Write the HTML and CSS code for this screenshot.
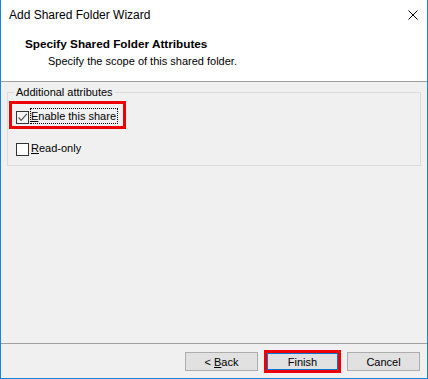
FILE: index.html
```html
<!DOCTYPE html>
<html lang="en">

<head>
    <meta charset="UTF-8">
    <meta name="viewport" content="width=device-width, initial-scale=1.0">
    <title>Add Shared Folder Wizard</title>
    <link rel="stylesheet" href="styles.css">
</head>

<body>
    <div class="window">
        <div class="titlebar">
            <span class="caption">Add Shared Folder Wizard</span>
            <svg class="close" width="10" height="10" viewBox="0 0 10 10">
                <path d="M0.5 0.5 L9.5 9.5 M9.5 0.5 L0.5 9.5" stroke="#000" stroke-width="1" fill="none" />
            </svg>
        </div>

        <div class="header">
            <div class="heading">Specify Shared Folder Attributes</div>
            <div class="subheading">Specify the scope of this shared folder.</div>
        </div>

        <div class="body">
            <fieldset class="group">
                <legend>Additional attributes</legend>
                <div class="option marked">
                    <span class="check checked">
                        <svg width="11" height="11" viewBox="0 0 11 11">
                            <path d="M1.5 5.5 L4.2 8.3 L9.8 1.8" stroke="#555" stroke-width="1.2" fill="none" />
                        </svg>
                    </span>
                    <span class="label focus"><u>E</u>nable this share</span>
                </div>
                <div class="option">
                    <span class="check"></span>
                    <span class="label"><u>R</u>ead-only</span>
                </div>
            </fieldset>
        </div>

        <div class="footer">
            <button class="btn">&lt; <u>B</u>ack</button>
            <button class="btn default marked">Finish</button>
            <button class="btn">Cancel</button>
        </div>
    </div>
</body>

</html>
```

FILE: styles.css
```css
* {
    margin: 0;
    padding: 0;
    box-sizing: border-box;
}

body {
    font-family: "Liberation Sans", Arial, sans-serif;
    font-size: 11px;
    color: #000000;
    background-color: #f0f0f0;
}

.window {
    width: 428px;
    height: 379px;
    display: flex;
    flex-direction: column;
    border: 1px solid #1883d7;
    border-top: 0;
    background-color: #f0f0f0;
}

.titlebar {
    height: 30px;
    display: flex;
    align-items: center;
    justify-content: space-between;
    padding: 0 9px 0 8px;
    background-color: #ffffff;
}

.caption {
    font-size: 12px;
    line-height: 30px;
}

.close {
    display: block;
}

.header {
    height: 52px;
    padding-top: 7px;
    background-color: #ffffff;
    border-bottom: 1px solid #a0a0a0;
    line-height: 14px;
}

.heading {
    padding-left: 24px;
    font-size: 11.75px;
    font-weight: bold;
}

.subheading {
    margin-top: 3px;
    padding-left: 47px;
}

.body {
    flex: 1;
    padding: 3px 6px 0 6px;
}

.group {
    border: 1px solid #dcdcdc;
    padding: 6px 6px 8px 6px;
}

.group legend {
    padding: 0 2px;
    line-height: 14px;
}

.option {
    display: flex;
    align-items: flex-end;
    width: fit-content;
    height: 20px;
    margin-left: -1px;
    padding: 0 4px 1px 3px;
}

.option + .option {
    margin-top: 12px;
}

.option.marked {
    outline: 3px solid #ee0000;
    outline-offset: 1px;
}

.check {
    display: flex;
    align-items: center;
    justify-content: center;
    width: 13px;
    height: 13px;
    border: 1px solid #333333;
    background-color: #ffffff;
}

.check.checked {
    background-color: #f3f3f3;
}

.label {
    margin-left: 1px;
    height: 16px;
    line-height: 14px;
    padding-right: 1px;
    border: 1px dotted transparent;
}

.label.focus {
    border-color: #000000;
}

.footer {
    height: 35px;
    display: flex;
    justify-content: flex-end;
    gap: 8px;
    padding: 8px 7px 0 0;
    border-top: 1px solid #a0a0a0;
}

.btn {
    width: 73px;
    height: 19px;
    font-family: inherit;
    font-size: 11px;
    color: #000000;
    background-color: #e1e1e1;
    border: 1px solid #adadad;
}

.btn.default {
    border-color: #0078d7;
    box-shadow: inset 0 0 0 1px #0078d7;
}

.btn.marked {
    outline: 3px solid #ee0000;
    outline-offset: -1px;
}
```
